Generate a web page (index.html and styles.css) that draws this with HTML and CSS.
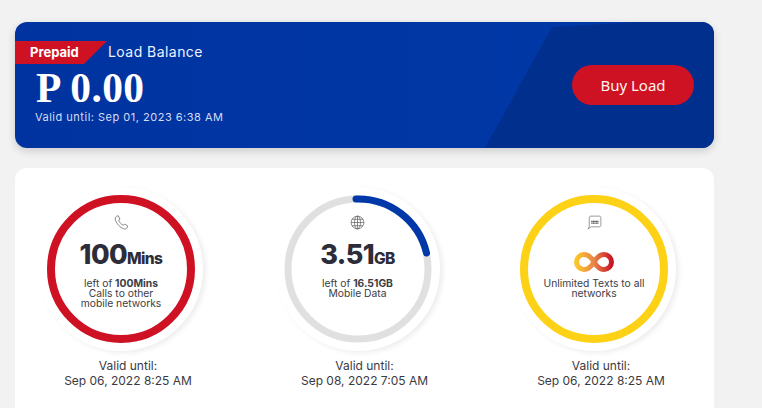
FILE: index.html
```html
<!DOCTYPE html>
<html lang="en">
<head>
  <meta charset="UTF-8">
  <title>Dashboard</title>
  <link rel="stylesheet" href="styles.css">
</head>
<body>

  <section class="balance-card">
    <div class="balance-left">
      <div class="balance-head">
        <span class="prepaid-tag">Prepaid</span>
        <span class="balance-label">Load Balance</span>
      </div>
      <div class="balance-amount">P 0.00</div>
      <div class="balance-valid">Valid until: Sep 01, 2023 6:38 AM</div>
    </div>
    <button class="buy-btn">Buy Load</button>
  </section>

  <section class="usage-card">
    <div class="usage-col">
      <div class="gauge">
        <svg class="gauge-ring" viewBox="0 0 164 164">
          <circle cx="82" cy="82" r="70" fill="none" stroke="#cf1124" stroke-width="8"/>
        </svg>
        <div class="gauge-body">
          <svg class="gauge-icon" viewBox="0 0 16 16" fill="none" stroke="#666" stroke-width="0.8" stroke-linejoin="round">
            <path d="M2.6 1.4 4.6 .8 6.400 4.400 5 5.600C5.400 7.400 8 10.400 10 11L11.200 9.600 14.600 11.600 14 13.600C13.400 15 11.600 15.200 10 14.600 6.400 13.200 2.800 9.400 1.600 5.600 1 3.800 1.400 2.200 2.600 1.400Z"/>
          </svg>
          <div class="gauge-value">100<small>Mins</small></div>
          <p class="gauge-note">left of <b>100Mins</b><br>Calls to other<br>mobile networks</p>
        </div>
      </div>
      <p class="usage-valid">Valid until:<br>Sep 06, 2022 8:25 AM</p>
    </div>

    <div class="usage-col">
      <div class="gauge">
        <svg class="gauge-ring" viewBox="0 0 164 164">
          <circle cx="82" cy="82" r="70" fill="none" stroke="#e0e0e0" stroke-width="7"/>
          <path d="M80 12A70 70 0 0 1 150.500 66" fill="none" stroke="#0038a8" stroke-width="7" stroke-linecap="round"/>
        </svg>
        <div class="gauge-body">
          <svg class="gauge-icon" viewBox="0 0 16 16" fill="none" stroke="#555" stroke-width="0.7">
            <circle cx="8" cy="8" r="6.800"/>
            <ellipse cx="8" cy="8" rx="3.200" ry="6.800"/>
            <path d="M8 1.200V14.800M1.200 8H14.800M2.200 4.600H13.800M2.200 11.400H13.800"/>
          </svg>
          <div class="gauge-value">3.51<small>GB</small></div>
          <p class="gauge-note">left of <b>16.51GB</b><br>Mobile Data</p>
        </div>
      </div>
      <p class="usage-valid">Valid until:<br>Sep 08, 2022 7:05 AM</p>
    </div>

    <div class="usage-col">
      <div class="gauge">
        <svg class="gauge-ring" viewBox="0 0 164 164">
          <circle cx="82" cy="82" r="70" fill="none" stroke="#fdd116" stroke-width="8"/>
        </svg>
        <div class="gauge-body">
          <svg class="gauge-icon" viewBox="0 0 16 16" fill="none" stroke="#666" stroke-width="0.7" stroke-linejoin="round">
            <path d="M1 15 2.400 12.800V3C2.400 1.800 3 1.200 4.200 1.200H13C14.200 1.200 14.800 1.800 14.800 3V10.600C14.800 11.800 14.200 12.600 13 12.600H4.400Z"/>
            <path d="M4.600 6.800H12.600M4.600 8.600H12.600" stroke="#444" stroke-width="1.300" stroke-dasharray="1.200 .4"/>
          </svg>
          <svg class="infinity" viewBox="0 0 42 22" fill="none">
            <defs>
              <linearGradient id="infGrad" x1="0" y1="0" x2="1" y2="0">
                <stop offset="0" stop-color="#fbc52b"/>
                <stop offset="0.5" stop-color="#e8864a"/>
                <stop offset="1" stop-color="#cb1526"/>
              </linearGradient>
            </defs>
            <path d="M21 11C18 6 15 3.500 11 3.500A7.500 7.500 0 0 0 11 18.500C15 18.500 18 16 21 11S27 3.500 31 3.500A7.500 7.500 0 0 1 31 18.500C27 18.500 24 16 21 11Z" stroke="url(#infGrad)" stroke-width="5"/>
          </svg>
          <p class="gauge-note">Unlimited Texts to all<br>networks</p>
        </div>
      </div>
      <p class="usage-valid">Valid until:<br>Sep 06, 2022 8:25 AM</p>
    </div>
  </section>

</body>
</html>
```

FILE: styles.css
```css
html, body {
  height: 100%;
  overflow: hidden;
}

body {
  margin: 0;
  padding: 22px 48px 0 15px;
  box-sizing: border-box;
  background: #f2f2f2;
  font-family: 'Inter', 'Open Sans', sans-serif;
  color: #3a3a42;
}

.balance-card {
  position: relative;
  display: flex;
  justify-content: space-between;
  height: 126px;
  padding: 19px 20px 0 0;
  box-sizing: border-box;
  border-radius: 12px;
  background: linear-gradient(90deg, #0033a0, #0039a8);
  box-shadow: 0 3px 8px rgba(0, 0, 0, 0.16);
  overflow: hidden;
  color: white;
}

.balance-card::after {
  content: "";
  position: absolute;
  inset: 0;
  background: #002f8e;
  clip-path: polygon(537px 5px, 625px 0, 100% 0, 100% 100%, 470px 100%);
}

.balance-left, .buy-btn {
  position: relative;
  z-index: 1;
}

.balance-head {
  display: flex;
  align-items: center;
  height: 23px;
}

.prepaid-tag {
  box-sizing: border-box;
  width: 92px;
  height: 23px;
  padding-left: 15px;
  background: #cf1124;
  clip-path: polygon(0 0, 100% 0, 69px 100%, 0 100%);
  font-size: 13px;
  font-weight: 700;
  line-height: 23px;
}

.balance-label {
  margin: -2px 0 0 1px;
  font-size: 14px;
  letter-spacing: 0.45px;
  color: #eef3ff;
}

.balance-amount {
  margin: 2px 0 0 21px;
  font-family: 'Liberation Serif', serif;
  font-size: 41.500px;
  font-weight: 700;
  line-height: 44px;
  letter-spacing: 0.4px;
}

.balance-valid {
  margin: 0 0 0 20px;
  font-size: 11px;
  line-height: 14px;
  letter-spacing: 0.5px;
  color: #d3def5;
}

.buy-btn {
  width: 122px;
  height: 40px;
  margin-top: 24px;
  padding: 0;
  border: none;
  border-radius: 20px;
  background: #cf1124;
  color: #fff4ec;
  font-family: 'Noto Sans', sans-serif;
  font-size: 15px;
}

.usage-card {
  display: grid;
  grid-template-columns: repeat(3, 236.500px);
  justify-content: center;
  width: 699px;
  height: 260px;
  margin-top: 20px;
  box-sizing: border-box;
  padding: 18.500px 0 0;
  border-radius: 12px;
  background: white;
}

.usage-col {
  display: flex;
  flex-direction: column;
  align-items: center;
}

.gauge {
  position: relative;
  width: 164px;
  height: 164px;
  margin-left: -14px;
  border-radius: 50%;
  box-shadow: 3px 2px 5px rgba(0, 0, 0, 0.07);
}

.gauge-ring {
  position: absolute;
  inset: 0;
}

.gauge-body {
  position: relative;
  display: flex;
  flex-direction: column;
  align-items: center;
  padding-top: 28.500px;
}

.gauge-icon {
  width: 15px;
  height: 15px;
}

.gauge-value {
  margin-top: 8px;
  font-size: 27px;
  font-weight: 800;
  line-height: 34px;
  letter-spacing: -0.6px;
  color: #2d2d3a;
}

.gauge-value small {
  font-size: 15.500px;
}

.gauge-note {
  margin: 2px 0 0;
  font-size: 10.300px;
  line-height: 10px;
  text-align: center;
  color: #3c3c44;
}

.infinity {
  width: 42px;
  height: 22px;
  margin: 21px 0 3px;
}

.usage-valid {
  margin: 7px 0 0;
  font-size: 12px;
  line-height: 15px;
  text-align: center;
  color: #3a3a42;
}
```
